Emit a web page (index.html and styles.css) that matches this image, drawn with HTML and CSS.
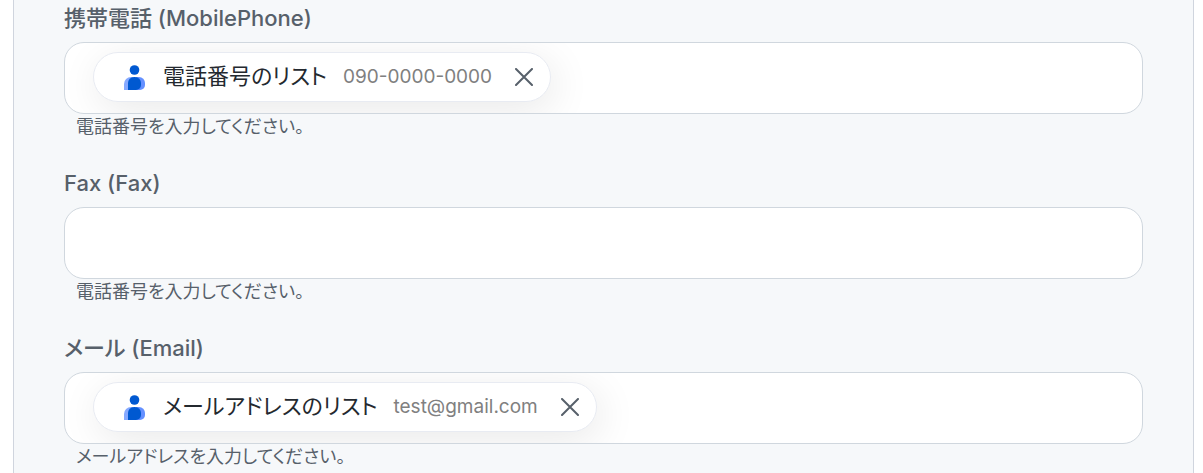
FILE: index.html
```html
<!DOCTYPE html>
<html lang="ja">
<head>
    <meta charset="UTF-8">
    <meta name="viewport" content="width=device-width, initial-scale=1.0">
    <title>連絡先</title>
    <link rel="stylesheet" href="styles.css">
</head>
<body>
    <form class="panel">
        <div class="field">
            <label class="label" for="mobile">携帯電話 (MobilePhone)</label>
            <div class="control">
                <div class="chip">
                    <svg class="person" viewBox="0 0 22 26" aria-hidden="true">
                        <circle cx="10.5" cy="6" r="4.8" fill="#0059d1"/>
                        <path d="M0 26v-6a7 7 0 0 1 7-7h2v13z" fill="#86a9ff"/>
                        <path d="M12 13h3a6 6 0 0 1 6 6v2a5 5 0 0 1-5 5h-4z" fill="#6490ff"/>
                        <path d="M4 26v-7a6 6 0 0 1 6-6h1a6 6 0 0 1 6 6v2a5 5 0 0 1-5 5z" fill="#0059d1"/>
                    </svg>
                    <span class="chip-name">電話番号のリスト</span>
                    <span class="chip-value">090-0000-0000</span>
                    <button class="remove" type="button" aria-label="削除">
                        <svg viewBox="0 0 18 18" aria-hidden="true"><path d="M1 1l16 16M17 1L1 17"/></svg>
                    </button>
                </div>
                <input class="input" id="mobile" type="text" aria-describedby="mobile-help">
            </div>
            <p class="help" id="mobile-help">電話番号を入力してください。</p>
        </div>

        <div class="field">
            <label class="label" for="fax">Fax (Fax)</label>
            <div class="control">
                <input class="input" id="fax" type="text" aria-describedby="fax-help">
            </div>
            <p class="help" id="fax-help">電話番号を入力してください。</p>
        </div>

        <div class="field">
            <label class="label" for="email">メール (Email)</label>
            <div class="control">
                <div class="chip">
                    <svg class="person" viewBox="0 0 22 26" aria-hidden="true">
                        <circle cx="10.5" cy="6" r="4.8" fill="#0059d1"/>
                        <path d="M0 26v-6a7 7 0 0 1 7-7h2v13z" fill="#86a9ff"/>
                        <path d="M12 13h3a6 6 0 0 1 6 6v2a5 5 0 0 1-5 5h-4z" fill="#6490ff"/>
                        <path d="M4 26v-7a6 6 0 0 1 6-6h1a6 6 0 0 1 6 6v2a5 5 0 0 1-5 5z" fill="#0059d1"/>
                    </svg>
                    <span class="chip-name">メールアドレスのリスト</span>
                    <span class="chip-value">test@gmail.com</span>
                    <button class="remove" type="button" aria-label="削除">
                        <svg viewBox="0 0 18 18" aria-hidden="true"><path d="M1 1l16 16M17 1L1 17"/></svg>
                    </button>
                </div>
                <input class="input" id="email" type="text" aria-describedby="email-help">
            </div>
            <p class="help" id="email-help">メールアドレスを入力してください。</p>
        </div>
    </form>
</body>
</html>
```

FILE: styles.css
```css
* {
    box-sizing: border-box;
}
body {
    margin: 0;
    background: #fff;
    font-family: Inter, "Noto Sans CJK JP", sans-serif;
    font-feature-settings: "palt";
}
.panel {
    display: flex;
    flex-direction: column;
    gap: 27px;
    min-height: 100vh;
    margin: 0 9px 0 13px;
    padding: 2px 50px 0;
    background: #f6f8fa;
    border: solid #d0d5de;
    border-width: 0 1px;
}
.field {
    display: flex;
    flex-direction: column;
}
.label {
    height: 40px;
    color: #57606a;
    font-size: 22px;
    font-weight: 500;
    line-height: 32px;
}
.control {
    display: flex;
    align-items: center;
    height: 72px;
    padding: 0 28px;
    overflow: hidden;
    background: #fff;
    border: 1px solid #d0d7de;
    border-radius: 20px;
}
.chip {
    display: flex;
    align-items: center;
    height: 50px;
    margin-bottom: 2px;
    padding: 0 17px 0 30px;
    background: #fff;
    border: 1px solid #e8ebf2;
    border-radius: 25px;
    box-shadow: 4px 8px 40px rgba(0, 0, 0, 0.09);
    white-space: nowrap;
}
.person {
    width: 22px;
    height: 26px;
}
.chip-name {
    margin-left: 17px;
    padding-bottom: 2px;
    color: #24292f;
    font-size: 22px;
    line-height: 32px;
}
.chip-value {
    margin-left: 16px;
    color: #808080;
    font-size: 19px;
    line-height: 32px;
}
.remove {
    display: flex;
    margin-left: 23px;
    padding: 0;
    background: none;
    border: none;
    cursor: pointer;
}
.remove svg {
    width: 18px;
    height: 18px;
    fill: none;
    stroke: #57606a;
    stroke-width: 2;
    stroke-linecap: round;
}
.input {
    flex: 1;
    min-width: 0;
    height: 48px;
    padding: 0;
    background: none;
    border: none;
    outline: none;
    font: inherit;
    font-size: 22px;
}
.help {
    height: 26px;
    margin: 0;
    padding-left: 12px;
    color: #57606a;
    font-size: 18px;
    line-height: 26px;
}
```
